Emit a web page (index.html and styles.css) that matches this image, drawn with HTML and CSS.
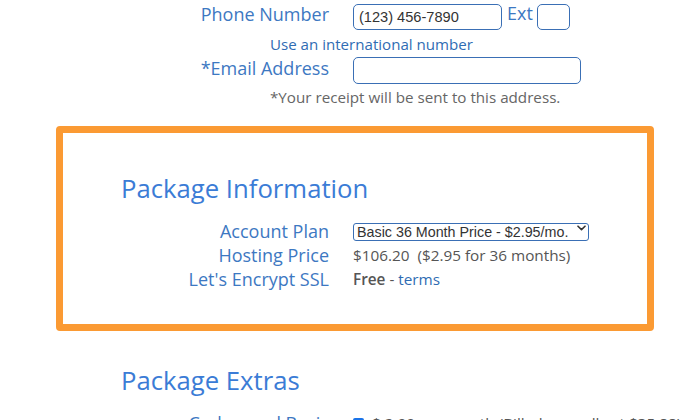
FILE: index.html
```html
<!DOCTYPE html>
<html>
<head>
<meta charset="utf-8">
<link rel="stylesheet" href="styles.css">
</head>
<body>
<div class="page">
  <div class="row row-phone">
    <label class="lbl">Phone Number</label>
    <div class="field">
      <input class="inp inp-phone" type="text" value="(123) 456-7890">
      <span class="ext">Ext</span>
      <input class="inp inp-ext" type="text">
    </div>
  </div>
  <div class="hint">Use an international number</div>
  <div class="row row-email">
    <label class="lbl">*Email Address</label>
    <div class="field">
      <input class="inp inp-email" type="text">
    </div>
  </div>
  <div class="note">*Your receipt will be sent to this address.</div>

  <div class="package">
    <h2 class="sec-title">Package Information</h2>
    <div class="prow">
      <span class="plbl">Account Plan</span>
      <span class="pval">
        <span class="sel-wrap">
          <select class="sel"><option>Basic 36 Month Price - $2.95/mo.</option></select>
          <svg class="chev" width="9" height="6" viewBox="0 0 9 6"><path d="M1 1.2 L4.5 4.6 L8 1.2" fill="none" stroke="#333" stroke-width="1.6" stroke-linecap="round" stroke-linejoin="round"/></svg>
        </span>
      </span>
    </div>
    <div class="prow">
      <span class="plbl">Hosting Price</span>
      <span class="pval">$106.20&nbsp; ($2.95 for 36 months)</span>
    </div>
    <div class="prow">
      <span class="plbl">Let's Encrypt SSL</span>
      <span class="pval"><b class="free">Free</b> - <a class="terms" href="#">terms</a></span>
    </div>
  </div>

  <h2 class="sec-title extras">Package Extras</h2>
  <div class="prow">
    <span class="plbl">Codeguard Basic</span>
    <span class="pval"><span class="chk"></span> $ 2.99 per month (Billed annually at $35.88)</span>
  </div>
</div>
</body>
</html>
```

FILE: styles.css
```css
html, body {
  margin: 0;
  padding: 0;
  background: #fff;
  overflow: hidden;
}
body {
  font-family: "Open Sans", "Liberation Sans", sans-serif;
  width: 700px;
  height: 420px;
}
.page {
  padding-top: 4px;
}
.row {
  display: grid;
  grid-template-columns: 329px 1fr;
  column-gap: 24px;
  align-items: center;
}
.lbl {
  text-align: right;
  font-size: 18px;
  color: #3d78c2;
  line-height: 22px;
}
.row-phone .lbl {
  margin-top: -6px;
}
.field {
  display: flex;
  align-items: center;
}
.inp {
  box-sizing: border-box;
  height: 26px;
  border: 1px solid #3a6fb5;
  border-radius: 5px;
  padding: 0 5px;
  font-family: "Liberation Sans", Arial, sans-serif;
  font-size: 14.6px;
  color: #333;
  outline: none;
  background: #fff;
}
.inp-phone { width: 149px; }
.ext {
  font-size: 18px;
  color: #3d78c2;
  margin: -8px 4px 0 5px;
}
.inp-ext { width: 33px; }
.inp-email { width: 228px; height: 27px; }
.hint {
  padding-left: 270px;
  font-size: 15.1px;
  color: #2f6cb3;
  line-height: 20px;
  margin-top: 4px;
}
.row-email {
  margin-top: 3px;
}
.row-email .lbl {
  margin-top: -6px;
}
.note {
  padding-left: 270px;
  font-size: 15.2px;
  color: #666;
  line-height: 20px;
  margin-top: 3px;
}
.package {
  margin: 19px 0 0 56px;
  width: 598px;
  height: 205px;
  box-sizing: border-box;
  border: 7px solid #fb9a33;
  border-radius: 4px;
  padding-top: 38px;
}
.sec-title {
  margin: 0;
  font-weight: 400;
  font-size: 25.7px;
  line-height: 36px;
  color: #3b7cd6;
  padding-left: 58px;
}
.package .prow {
  grid-template-columns: 266px 1fr;
}
.package .sec-title {
  margin-bottom: 12px;
}
.prow {
  display: grid;
  grid-template-columns: 329px 1fr;
  column-gap: 24px;
  align-items: center;
  height: 24px;
}
.plbl {
  text-align: right;
  font-size: 18px;
  color: #3d78c2;
  line-height: 24px;
}
.pval {
  font-size: 15.3px;
  color: #555;
  line-height: 24px;
  display: flex;
  align-items: center;
  white-space: nowrap;
}
.sel-wrap {
  position: relative;
  display: inline-block;
}
.sel {
  appearance: none;
  -webkit-appearance: none;
  box-sizing: border-box;
  width: 236px;
  height: 18px;
  border: 1px solid #3a6fb5;
  border-radius: 3px;
  padding: 0 0 0 3px;
  font-family: "Liberation Sans", Arial, sans-serif;
  font-size: 14.3px;
  line-height: 16px;
  color: #333;
  background: #fff;
}
.chev {
  position: absolute;
  right: 3px;
  top: 6px;
}
.free {
  font-weight: 600;
  color: #555;
  margin-right: 4px;
}
.terms {
  color: #2f6cb3;
  text-decoration: none;
  margin-left: 4px;
}
.extras {
  margin-top: 32px;
  padding-left: 121px;
  margin-bottom: 12px;
}
.chk {
  display: inline-block;
  width: 11px;
  height: 11px;
  background: #1a73e8;
  border-radius: 2px;
  margin-right: 8px;
}
```
